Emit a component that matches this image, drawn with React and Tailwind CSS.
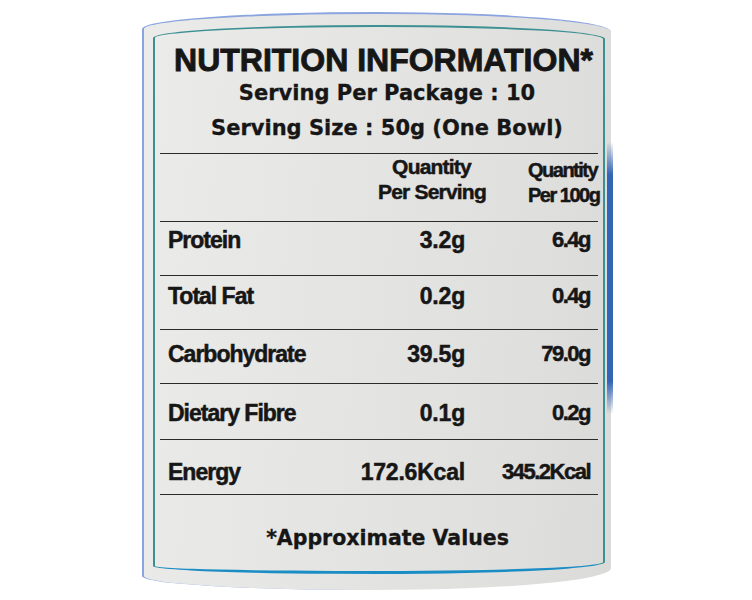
import React from "react";

const rows = [
  { name: "Protein", serving: "3.2g", per100: "6.4g", h: "h-[54px]", pt: "pt-[6px]" },
  { name: "Total Fat", serving: "0.2g", per100: "0.4g", h: "h-[54px]", pt: "pt-[8px]" },
  { name: "Carbohydrate", serving: "39.5g", per100: "79.0g", h: "h-[54px]", pt: "pt-[12px]" },
  { name: "Dietary Fibre", serving: "0.1g", per100: "0.2g", h: "h-[56px]", pt: "pt-[17px]" },
  { name: "Energy", serving: "172.6Kcal", per100: "345.2Kcal", h: "h-[55px]", pt: "pt-[20px]" },
];

const NutritionLabel = () => {
  return (
    <div className="relative w-[469px] h-[578px] border-t-2 border-l-2 border-[#8aa4df] rounded-tl-[235px_17px] rounded-tr-[235px_20px] rounded-bl-[235px_14px] rounded-br-[235px_22px] bg-[linear-gradient(95deg,#ebebe9_0%,#e5e5e3_40%,#dfdfdd_80%,#dadad8_100%)] pt-[11px] pl-[9px] pr-[6px] pb-[16px]">
      {/* blue of the pack showing on the right edge */}
      <div className="absolute right-[-2px] top-[128px] w-[6px] h-[272px] bg-[linear-gradient(to_bottom,transparent,#3464b6_12%,#3464b6_88%,transparent)]" />

      <div className="h-full border-2 border-[#3c8f92] border-b-[3px] border-b-[#1b8dc5] rounded-tl-[225px_13px] rounded-tr-[225px_14px] rounded-bl-[225px_8px] rounded-br-[225px_12px] text-[#161616]">
        {/* Title */}
        <h1 className="mt-[17px] pl-[9px] h-[32px] leading-[32px] text-center text-[32px] font-bold whitespace-nowrap font-['Liberation_Sans',Arial,sans-serif] [-webkit-text-stroke:0.9px_#161616]">
          NUTRITION INFORMATION*
        </h1>

        {/* Serving info */}
        <div className="pl-[16px] text-center text-[21px] leading-[35px] font-bold whitespace-nowrap font-['DejaVu_Sans',Verdana,sans-serif] [-webkit-text-stroke:0.3px_#161616]">
          <p>Serving Per Package : 10</p>
          <p>Serving Size : 50g (One Bowl)</p>
        </div>

        {/* Table */}
        <div className="mt-[7px] mx-[5px] font-['Liberation_Sans',Arial,sans-serif] font-bold [-webkit-text-stroke:0.5px_#161616]">
          <div className="h-[69px] border-t-[1.5px] border-b-[1.5px] border-[#2b2b2b] flex justify-end pr-[2px] text-[21px] leading-[25px] tracking-[-0.8px] whitespace-nowrap">
            <div className="w-[107px] text-center">
              <p>Quantity</p>
              <p>Per Serving</p>
            </div>
            <div className="ml-[43px] w-[68px] pt-[4px] text-center text-[20px] tracking-[-1.5px]">
              <p>Quantity</p>
              <p>Per 100g</p>
            </div>
          </div>

          {rows.map((row) => (
            <div
              key={row.name}
              className={`${row.h} ${row.pt} border-b-[1.5px] border-[#2b2b2b] grid grid-cols-[1fr_150px_125px] pl-[8px] pr-[8px] leading-[24px] whitespace-nowrap`}
            >
              <span className="text-[23px] tracking-[-1px]">{row.name}</span>
              <span className="text-right text-[23px] tracking-[-0.2px]">{row.serving}</span>
              <span className="text-right text-[22px] tracking-[-1.5px]">{row.per100}</span>
            </div>
          ))}
        </div>

        {/* Footer */}
        <p className="mt-[30px] pl-[17px] text-center text-[20.5px] leading-[26px] font-bold whitespace-nowrap font-['DejaVu_Sans',Verdana,sans-serif] [-webkit-text-stroke:0.3px_#161616]">
          *Approximate Values
        </p>
      </div>
    </div>
  );
};

export default function App() {
  return (
    <div className="w-[752px] h-[600px] bg-white pt-[12px] pl-[142px] overflow-hidden">
      <NutritionLabel />
    </div>
  );
}
